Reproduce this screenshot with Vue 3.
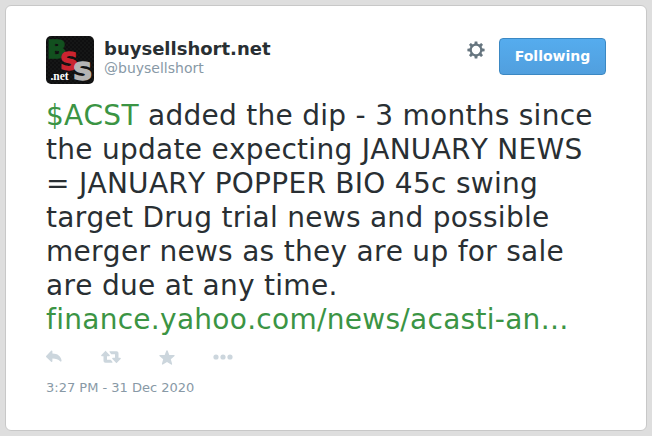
<template>
  <div class="page">
    <article class="tweet">
      <header class="tweet__header">
        <div class="avatar">
          <svg width="48" height="48" viewBox="0 0 48 48">
            <defs>
              <pattern id="mesh" width="4" height="4" patternUnits="userSpaceOnUse">
                <rect width="4" height="4" fill="#0f0f10" />
                <path d="M0 0h2v2H0zM2 2h2v2H2z" fill="#151616" />
              </pattern>
            </defs>
            <rect width="48" height="48" fill="url(#mesh)" />
            <text class="avatar__letter" x="1" y="21.8" textLength="19.5" lengthAdjust="spacingAndGlyphs" fill="#12501f" stroke="#12501f">B</text>
            <text class="avatar__letter" x="14" y="33.8" textLength="18" lengthAdjust="spacingAndGlyphs" fill="#cb2430" stroke="#cb2430">S</text>
            <text class="avatar__letter" x="27" y="43.6" textLength="19.5" lengthAdjust="spacingAndGlyphs" fill="#b4b4b4" stroke="#b4b4b4">S</text>
            <text class="avatar__net" x="4.5" y="44.3" textLength="18">.net</text>
          </svg>
        </div>
        <div class="author">
          <strong class="author__name">{{ name }}</strong>
          <span class="author__handle">{{ handle }}</span>
        </div>
        <svg class="gear" width="18" height="18" viewBox="0 0 18 18">
          <circle cx="9" cy="9" r="5.3" fill="none" stroke="#66757f" stroke-width="2.2" />
          <path
            v-for="angle in teeth"
            :key="angle"
            d="M7.2 4 7.7.4h2.6l.5 3.6z"
            fill="#66757f"
            :transform="`rotate(${angle} 9 9)`"
          />
        </svg>
        <button class="follow" type="button">Following</button>
      </header>

      <p class="tweet__text">
        <a class="link">$ACST</a> added the dip - 3 months since<br />
        the update expecting JANUARY NEWS<br />
        = JANUARY POPPER BIO 45c swing<br />
        target Drug trial news and possible<br />
        merger news as they are up for sale<br />
        are due at any time.<br />
        <a class="link">finance.yahoo.com/news/acasti-an…</a>
      </p>

      <div class="actions">
        <svg width="16" height="14" viewBox="0 0 16 14">
          <path
            d="M6.4 1.2v2.3c5.2.1 8.6 2.6 9.2 7.2.1.9-.9 1.3-1.5.6-1.8-1.9-4-2.7-7.7-2.7v2.6c0 .8-.8 1-1.3.6L.4 7.2c-.5-.5-.5-1.1 0-1.5L5.1.8c.5-.5 1.3-.3 1.3.4z"
          />
        </svg>
        <svg width="20" height="14" viewBox="0 0 20 14">
          <path
            d="M4.3.9.4 5c-.5.5-.2 1.2.5 1.2h1.6v4.6c0 1.2.8 2 2 2h6.5c.6 0 .8-.5.5-.9L10 10.1c-.2-.3-.4-.3-.7-.3H6V6.2h2.1c.7 0 1-.7.5-1.2L4.8.9c-.2-.2-.4-.2-.5 0z"
          />
          <path
            d="M15.7 13.1 19.6 9c.5-.5.2-1.2-.5-1.2h-1.6V3.2c0-1.2-.8-2-2-2H9c-.6 0-.8.5-.5.9L10 3.9c.2.3.4.3.7.3H14v3.6h-2.1c-.7 0-1 .7-.5 1.2l3.8 4.1c.2.2.4.2.5 0z"
          />
        </svg>
        <svg width="16" height="15" viewBox="0 0 16 15">
          <path
            d="M8 .3c.4 0 .6.2.7.5l1.6 4.2h4.6c.8 0 1 .7.4 1.2l-3.5 3.1 1.3 4.5c.2.8-.4 1.1-1 .7L8 12.1l-4.1 2.4c-.6.4-1.2 0-1-.7l1.3-4.5L.7 6.2C.1 5.7.3 5 1.1 5h4.6L7.3.8c.1-.3.3-.5.7-.5z"
          />
        </svg>
        <svg width="20" height="6" viewBox="0 0 20 6">
          <circle cx="3" cy="3" r="2.6" />
          <circle cx="10" cy="3" r="2.6" />
          <circle cx="17" cy="3" r="2.6" />
        </svg>
      </div>

      <time class="tweet__time">{{ date }}</time>
    </article>
  </div>
</template>

<script setup>
const name = 'buysellshort.net'
const handle = '@buysellshort'
const date = '3:27 PM - 31 Dec 2020'

// eight gear teeth
const teeth = [0, 45, 90, 135, 180, 225, 270, 315]
</script>

<style>
body {
  background: #dedede;
}
</style>

<style scoped>
.page {
  box-sizing: border-box;
  height: 436px;
  padding: 5px;
  font-family: 'DejaVu Sans', sans-serif;
}

.tweet {
  box-sizing: border-box;
  height: 426px;
  padding: 30px 40px;
  background: #fff;
  border: 1px solid #c8c8c8;
  border-radius: 6px;
}

.tweet__header {
  display: flex;
  height: 48px;
}

.avatar {
  width: 48px;
  height: 48px;
  border-radius: 5px;
  overflow: hidden;
}

.avatar svg {
  display: block;
}

.avatar__letter {
  font: bold 24px 'DejaVu Sans', sans-serif;
  stroke-width: 1.3px;
}

.avatar__net {
  font: bold 11.5px 'Liberation Serif', serif;
  fill: #fff;
}

.author {
  display: flex;
  flex: 1;
  flex-direction: column;
  padding: 2px 0 0 10px;
}

.author__name {
  color: #292f33;
  font-size: 18px;
  line-height: 22px;
}

.author__handle {
  color: #8899a6;
  font-size: 14px;
  line-height: 17px;
}

.gear {
  margin: 5px 14px 0 0;
}

.follow {
  box-sizing: border-box;
  width: 107px;
  height: 37px;
  margin-top: 2px;
  padding: 0 0 2px;
  color: #fff;
  font: bold 14px 'DejaVu Sans', sans-serif;
  background: linear-gradient(#55acee, #519fde);
  border: 1px solid #3b88c3;
  border-radius: 4px;
}

.tweet__text {
  margin: 15px 0 0;
  color: #292f33;
  font-size: 28px;
  font-kerning: none;
  line-height: 34px;
  letter-spacing: 0.01em;
  white-space: nowrap;
}

.link {
  color: #3b9444;
}

.actions {
  display: flex;
  align-items: center;
  height: 16px;
  margin-top: 12px;
  fill: #ccd6dd;
}

.actions svg {
  margin-right: 38px;
}

.actions svg:nth-child(2) {
  margin: 0 38px 0 1px;
}

.tweet__time {
  display: block;
  margin-top: 14px;
  color: #8899a6;
  font-size: 13px;
  line-height: 18px;
}
</style>
